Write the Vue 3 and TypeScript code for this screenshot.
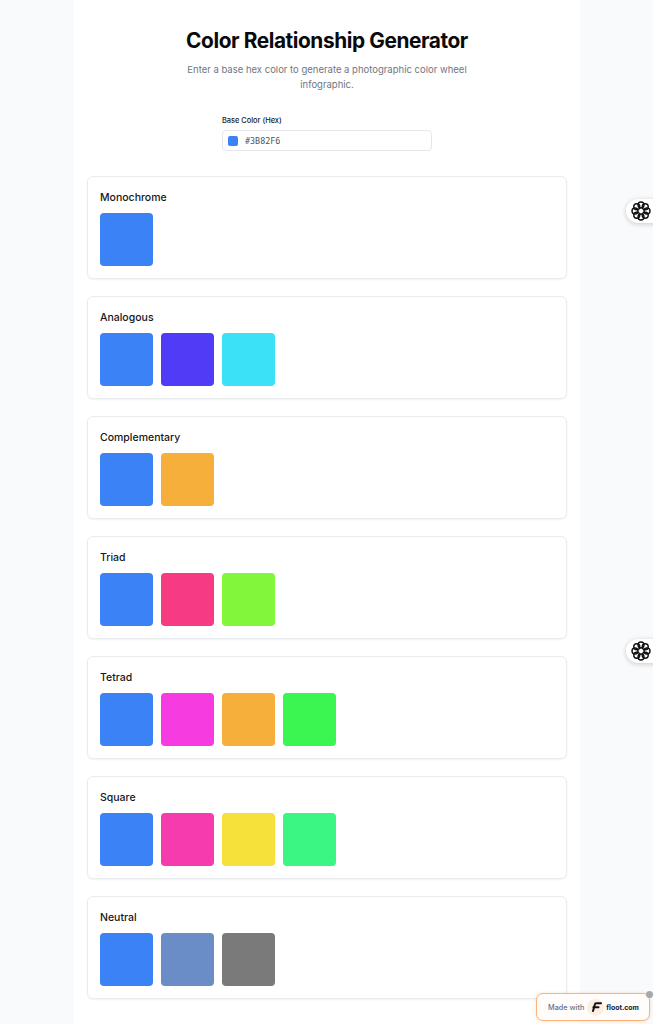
<script setup lang="ts">
interface Group { name: string; colors: string[] }
const blue = '#3b82f6'
const groups: Group[] = [
  { name: 'Monochrome', colors: [blue] },
  { name: 'Analogous', colors: [blue, '#503bf6', '#3be1f6'] },
  { name: 'Complementary', colors: [blue, '#f6af3b'] },
  { name: 'Triad', colors: [blue, '#f63b82', '#82f63b'] },
  { name: 'Tetrad', colors: [blue, '#f63be1', '#f6af3b', '#3bf650'] },
  { name: 'Square', colors: [blue, '#f63baf', '#f6e13b', '#3bf682'] },
  { name: 'Neutral', colors: [blue, '#6a8cc7', '#7a7a7a'] },
]
const petals = [0, 45, 90, 135, 180, 225, 270, 315].map((deg) => {
  const r = (deg * Math.PI) / 180
  return { x: 10 + 6 * Math.sin(r), y: 10 - 6 * Math.cos(r) }
})
</script>

<template>
  <div class="page">
    <main class="column">
      <header class="head">
        <h1>Color Relationship Generator</h1>
        <p>Enter a base hex color to generate a photographic color wheel infographic.</p>
      </header>
      <div class="field">
        <label>Base Color (Hex)</label>
        <div class="input">
          <span class="dot"></span>
          <span class="hex">#3B82F6</span>
        </div>
      </div>
      <section v-for="g in groups" :key="g.name" class="card">
        <h2>{{ g.name }}</h2>
        <div class="swatches">
          <div v-for="(c, i) in g.colors" :key="i" class="swatch" :style="{ background: c }"></div>
        </div>
      </section>
    </main>

    <button v-for="n in ['a', 'b']" :key="n" class="orb" :class="n">
      <svg width="20" height="20" viewBox="0 0 20 20" fill="none" stroke="#111" stroke-width="1.4">
        <circle v-for="(p, i) in petals" :key="i" :cx="p.x" :cy="p.y" r="3" />
      </svg>
    </button>

    <div class="badge">
      <span class="made">Made with</span>
      <span class="logo">
        <svg width="12" height="10" viewBox="0 0 12 10" fill="none" stroke="#111" stroke-width="2" stroke-linecap="round">
          <path d="M3 9 L5 2 Q5.3 1.2 6.5 1.2 L11 1.2" />
          <path d="M3.4 5.2 L8.5 5.2" />
        </svg>
      </span>
      <span class="site">floot.com</span>
      <span class="close"></span>
    </div>
  </div>
</template>

<style>
html, body { margin: 0; background: #f9fafb; }
</style>

<style scoped>
.page {
  position: relative;
  min-height: 1024px;
  overflow: hidden;
  font-family: Inter, "Liberation Sans", sans-serif;
  background: #f9fafb;
}
.column {
  box-sizing: border-box;
  width: 506px;
  height: 1024px;
  margin-left: 74px;
  padding: 28px 13px 0;
  background: #fff;
}
.head { text-align: center; }
h1 {
  margin: 0;
  font-size: 20.85px;
  line-height: 26px;
  font-weight: 700;
  letter-spacing: -0.42px;
  color: #0a0a0a;
}
.head p {
  width: 300px;
  margin: 8px auto 0;
  font-size: 9.5px;
  line-height: 15px;
  color: #71767f;
}
.field {
  width: 210px;
  margin: 23px auto 25px;
}
label {
  display: block;
  font-size: 7.4px;
  line-height: 11px;
  font-weight: 450;
  color: #171717;
  margin-bottom: 4px;
}
.input {
  box-sizing: border-box;
  height: 21px;
  display: flex;
  align-items: center;
  padding: 0 5px;
  border: 1px solid #e5e7eb;
  border-radius: 4px;
}
.dot {
  width: 10px;
  height: 10px;
  border-radius: 2px;
  background: #3b82f6;
  margin-right: 7px;
}
.hex {
  font-family: "DejaVu Sans Mono", monospace;
  font-size: 8.4px;
  color: #4b5563;
}
.card {
  box-sizing: border-box;
  height: 103px;
  margin-bottom: 17px;
  padding: 14px 12px 12px;
  border: 1px solid #e9ebee;
  border-radius: 6px;
  box-shadow: 0 1px 2px rgba(0, 0, 0, 0.05);
}
h2 {
  margin: 0 0 8px;
  font-size: 10.5px;
  line-height: 14px;
  font-weight: 450;
  color: #171717;
}
.swatches { display: flex; gap: 8px; }
.swatch {
  width: 53px;
  height: 53px;
  border-radius: 4px;
}
.orb {
  position: absolute;
  right: -6px;
  width: 33px;
  height: 24px;
  padding: 0 0 0 5px;
  display: flex;
  align-items: center;
  border: 0;
  border-radius: 12px 0 0 12px;
  background: #fff;
  box-shadow: 0 1px 5px rgba(0, 0, 0, 0.2);
}
.orb.a { top: 199px; }
.orb.b { top: 639px; }
.badge {
  position: absolute;
  left: 536px;
  top: 993px;
  box-sizing: border-box;
  width: 114px;
  height: 28px;
  display: flex;
  align-items: center;
  padding-left: 11px;
  border: 1.5px solid #fdb27a;
  border-radius: 7px;
  background: #fffdfb;
  box-shadow: 0 0 3px rgba(251, 146, 60, 0.35);
}
.made { font-size: 7.3px; font-weight: 500; color: #6b7280; white-space: nowrap; }
.logo {
  width: 17px;
  height: 17px;
  margin: 0 2px 0 3px;
  display: flex;
  align-items: center;
  justify-content: center;
  border-radius: 50%;
  background: #fdeee0;
}
.site { font-size: 6.9px; font-weight: 700; color: #111827; white-space: nowrap; }
.close {
  position: absolute;
  right: -3.5px;
  top: -3.5px;
  width: 7px;
  height: 7px;
  border-radius: 50%;
  background: #a3a7ae;
}
</style>
